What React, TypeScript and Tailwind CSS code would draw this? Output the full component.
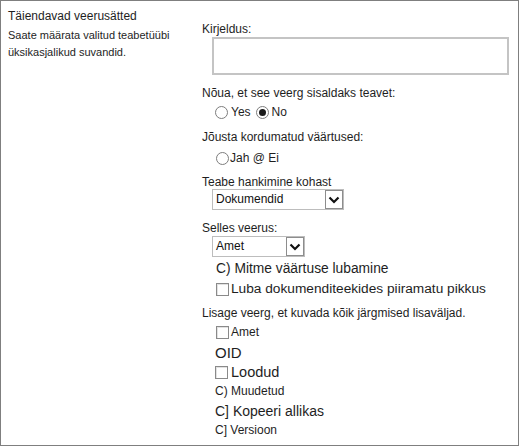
import React from "react";

const Radio = ({ checked = false }: { checked?: boolean }) => (
  <span className="inline-flex items-center justify-center w-[13px] h-[13px] rounded-full border border-[#7d7d7d] bg-white shrink-0">
    {checked && <span className="block w-[7px] h-[7px] rounded-full bg-[#1a1a1a]" />}
  </span>
);

const Check = () => (
  <span className="inline-block w-[13px] h-[13px] border border-[#8a8a8a] bg-white shrink-0 shadow-[inset_1px_1px_0_#e2e2e2]" />
);

const Chevron = () => (
  <svg width="12" height="8" viewBox="0 0 12 8">
    <path d="M1.5 1.5 L6 6 L10.5 1.5" fill="none" stroke="#111" strokeWidth="2.2" />
  </svg>
);

const Select = ({ value, width }: { value: string; width: string }) => (
  <div className={`ml-[10px] flex h-[21px] border border-[#bdbdbd] bg-white ${width}`}>
    <span className="flex-1 pl-[3px] text-[12px] leading-[19px] text-[#111]">{value}</span>
    <span className="w-[18px] h-[19px] border border-[#8d8d8d] flex items-center justify-center">
      <Chevron />
    </span>
  </div>
);

export default function App() {
  return (
    <div
      className="w-[519px] h-[446px] border border-[#7f7f7f] bg-white flex text-[#1e1e1e]"
      style={{ fontFamily: '"Liberation Sans", Arial, sans-serif' }}
    >
      <div className="w-[201px] shrink-0 pl-[7px]">
        <div className="mt-[7px] text-[12px] leading-[16px]">Täiendavad veerusätted</div>
        <div className="mt-[3px] text-[11px] leading-[16.5px]">
          Saate määrata valitud teabetüübi
          <br />
          üksikasjalikud suvandid.
        </div>
      </div>
      <div className="flex-1 flex flex-col">
        <div className="mt-[20px] text-[12px] leading-[16px]">Kirjeldus:</div>
        <div className="ml-[10px] w-[297px] h-[38px] border-2 border-[#c4c4c4] bg-white" />
        <div className="mt-[10px] text-[12px] leading-[16px]">Nõua, et see veerg sisaldaks teavet:</div>
        <div className="mt-[3px] ml-[13px] flex items-center text-[12px] leading-[16px]">
          <Radio />
          <span className="ml-[3px]">Yes</span>
          <span className="ml-[5px]"><Radio checked /></span>
          <span className="ml-[3px]">No</span>
        </div>
        <div className="mt-[9px] text-[12px] leading-[16px]">Jõusta kordumatud väärtused:</div>
        <div className="mt-[5px] ml-[14px] flex items-center text-[12px] leading-[16px]">
          <Radio />
          <span className="ml-[1px]">Jah @ Ei</span>
        </div>
        <div className="mt-[9px] text-[12px] leading-[14px]">Teabe hankimine kohast</div>
        <Select value="Dokumendid" width="w-[132px]" />
        <div className="mt-[11px] text-[12px] leading-[14px]">Selles veerus:</div>
        <div className="mt-[1px]">
          <Select value="Amet" width="w-[93px]" />
        </div>
        <div className="mt-[3px] ml-[14px] text-[13.8px] leading-[18px]">C) Mitme väärtuse lubamine</div>
        <div className="mt-[2px] ml-[14px] flex items-center text-[13.7px] leading-[18px]">
          <Check />
          <span className="ml-[2px]">Luba dokumenditeekides piiramatu pikkus</span>
        </div>
        <div className="mt-[7px] text-[12px] leading-[16px]">Lisage veerg, et kuvada kõik järgmised lisaväljad.</div>
        <div className="mt-[3px] ml-[14px] flex items-center text-[12px] leading-[16px]">
          <Check />
          <span className="ml-[2px]">Amet</span>
        </div>
        <div className="mt-[4px] ml-[13px] text-[15px] leading-[18px]">OID</div>
        <div className="mt-[1px] ml-[13px] flex items-center text-[14.5px] leading-[18px]">
          <Check />
          <span className="ml-[3px]">Loodud</span>
        </div>
        <div className="mt-[2px] ml-[13px] text-[12px] leading-[16px]">C) Muudetud</div>
        <div className="mt-[3px] ml-[13px] text-[14px] leading-[18px]">C] Kopeeri allikas</div>
        <div className="mt-[2px] ml-[13px] text-[12px] leading-[16px]">C] Versioon</div>
      </div>
    </div>
  );
}
